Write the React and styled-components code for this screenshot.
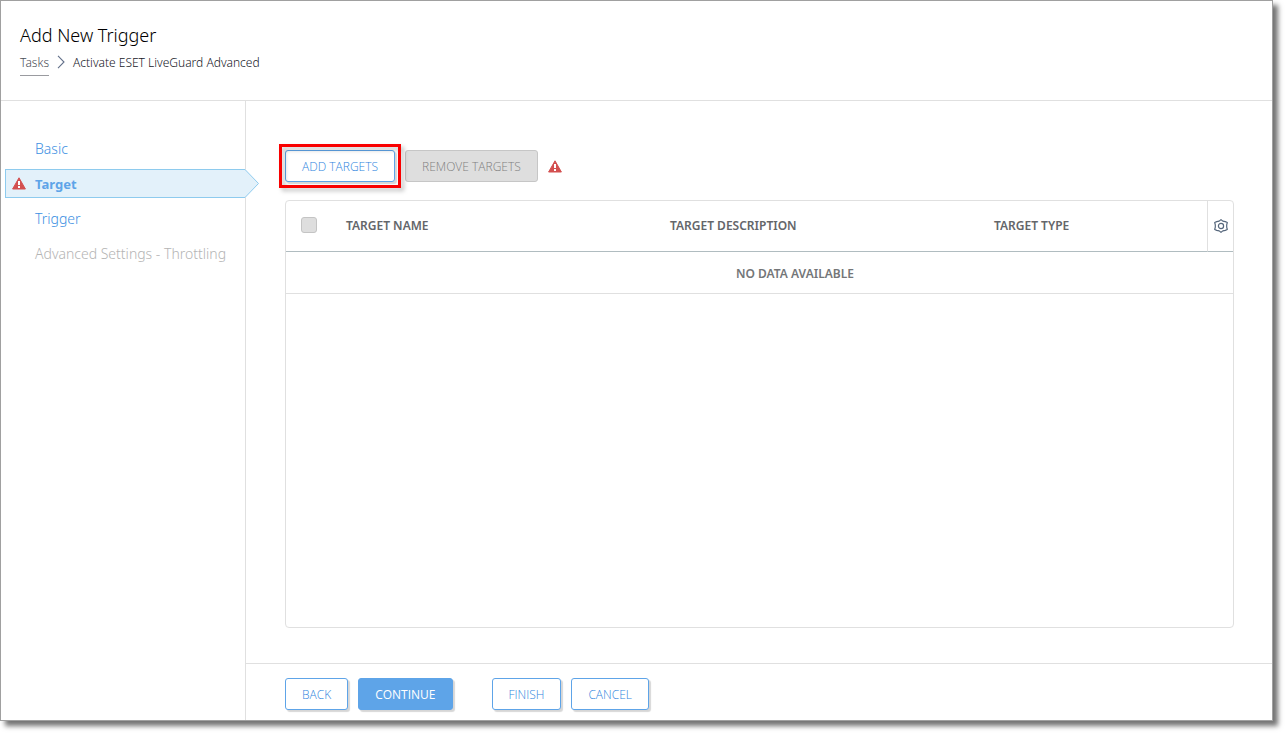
import React, { useState } from 'react';
import styled, { createGlobalStyle, css } from 'styled-components';

const GlobalStyle = createGlobalStyle`
  * {
    box-sizing: border-box;
  }

  body {
    margin: 0;
    background: #fff;
    color: #53565a;
    font-family: "Noto Sans", "Open Sans", sans-serif;
    font-size: 12px;
    font-weight: 300;
    line-height: 16px;
  }
`;

const Window = styled.div`
  display: flex;
  flex-direction: column;
  min-height: calc(100vh - 15px);
  margin: 0 15px 15px 0;
  border: 1px solid #a0a0a0;
  background: #fff;
  box-shadow: 5px 5px 5px rgba(0, 0, 0, 0.55);
`;

const Header = styled.header`
  height: 100px;
  padding: 22px 19px 0;
  border-bottom: 1px solid #e0e0e0;
`;

const Title = styled.h1`
  margin: 0;
  color: #000;
  font-size: 18px;
  font-weight: 300;
  line-height: 24px;
`;

const Breadcrumb = styled.nav`
  display: flex;
  align-items: flex-start;
  gap: 8px;
  padding-top: 8px;

  a {
    height: 21px;
    border-bottom: 1px solid #9a9ba0;
    color: #4a4d56;
    text-decoration: none;
  }

  span {
    color: #16171f;
  }
`;

const Body = styled.div`
  flex: 1;
  display: flex;
`;

const Sidebar = styled.nav`
  flex: 0 0 245px;
  padding: 33px 0 0 4px;
  border-right: 1px solid #e0e0e0;

  ul {
    display: flex;
    flex-direction: column;
    gap: 6px;
    margin: 0;
    padding: 0;
    list-style: none;
  }
`;

const Step = styled.a`
  position: relative;
  display: flex;
  align-items: center;
  height: 29px;
  padding: 1px 0 0 30px;
  color: ${(props) => (props.$disabled ? '#b4b4b4' : '#3c8fe2')};
  font-size: 14px;
  text-decoration: none;

  ${(props) =>
    props.$active &&
    css`
      padding: 0 0 0 29px;
      border: 1px solid #8ecbee;
      border-right: none;
      background: #e3f1fa;
      color: #5ea4e8;
      font-size: 13px;
      font-weight: 700;
    `}
`;

const StepAlert = styled.span`
  position: absolute;
  left: 6px;
  top: 7px;
  display: flex;
`;

const StepArrow = styled.svg`
  position: absolute;
  top: -1px;
  left: 100%;
`;

const Main = styled.main`
  flex: 1;
  min-width: 0;
  display: flex;
  flex-direction: column;
`;

const Content = styled.section`
  flex: 1;
  display: flex;
  flex-direction: column;
  padding: 49px 38px 35px 39px;
`;

const Toolbar = styled.div`
  display: flex;
  align-items: center;
  gap: 10px;
  margin-bottom: 18px;
`;

const Button = styled.button`
  height: 32px;
  padding: 1px 16px 0;
  border: 1px solid #5ea4e8;
  border-radius: 3px;
  background: ${(props) => (props.$primary ? '#5ea4e8' : '#fff')};
  box-shadow: 2px 2px 1px rgba(0, 0, 0, 0.16);
  color: ${(props) => (props.$primary ? '#fff' : '#2f86de')};
  font-family: "Open Sans", "Noto Sans", sans-serif;
  font-size: 12px;
  font-weight: ${(props) => (props.$primary ? 400 : 300)};
  line-height: 16px;
  cursor: pointer;

  &:disabled {
    border-color: #c6c6c6;
    background: #dedede;
    box-shadow: none;
    color: #808080;
    cursor: default;
  }
`;

const Highlight = styled.div`
  position: relative;
  display: flex;

  &::after {
    content: '';
    position: absolute;
    inset: -6px;
    border: 3px solid #f90000;
    filter: drop-shadow(3px 3px 2px rgba(0, 0, 0, 0.25));
    pointer-events: none;
  }
`;

const TableBox = styled.div`
  flex: 1;
  border: 1px solid #e0e0e0;
  border-radius: 4px;
`;

const Table = styled.table`
  width: 100%;
  border-collapse: separate;
  border-spacing: 0;
  table-layout: fixed;

  th {
    height: 51px;
    padding: 0 10px;
    border-bottom: 1px solid #b0bcc0;
    color: #64666a;
    font-weight: 600;
    text-align: left;
  }

  th:last-child {
    padding: 0;
    border-left: 1px solid #e0e0e0;
  }

  td {
    height: 42px;
    padding: 2px 0 0 71px;
    border-bottom: 1px solid #e0e0e0;
    color: #747678;
    font-weight: 600;
    text-align: center;
  }
`;

const Checkbox = styled.input`
  appearance: none;
  display: block;
  width: 16px;
  height: 16px;
  margin: 0 0 2px 5px;
  border: 1px solid #c4c4c4;
  border-radius: 3px;
  background: #dedede;
`;

const IconButton = styled.button`
  display: flex;
  align-items: center;
  justify-content: center;
  width: 100%;
  height: 32px;
  padding: 0;
  border: none;
  background: none;
  color: #56677c;
  cursor: pointer;
`;

const Footer = styled.footer`
  display: flex;
  gap: 10px;
  padding: 14px 39px 10px;
  border-top: 1px solid #e0e0e0;
`;

const ButtonGroup = styled.div`
  display: flex;
  gap: 10px;

  & + & {
    margin-left: 29px;
  }
`;

const AlertIcon = () => (
  <svg width="14" height="13" viewBox="0 0 14 13" aria-hidden="true">
    <path d="M7 .8L13.4 12H.6z" fill="#d35050" stroke="#d35050" strokeWidth="1" strokeLinejoin="round" />
    <path d="M6 4h2v4H6zM6 9h2v2H6z" fill="#fff" />
  </svg>
);

const GearIcon = () => (
  <svg width="14" height="14" viewBox="0 0 14 14" fill="none" stroke="currentColor" strokeWidth="1.2" aria-hidden="true">
    <path
      d="M7 .6L8.8 2.1 11.3 2.6 13.3 3.5 12.7 5.8 12.7 8.2 13.3 10.5 11.3 11.4 8.8 11.9 7 13.4 5.2 11.9 2.7 11.4 .7 10.5 1.3 8.2 1.3 5.8 .7 3.5 2.7 2.6 5.2 2.1z"
      strokeLinejoin="round"
    />
    <circle cx="7" cy="7" r="2.6" />
  </svg>
);

const steps = [
  { label: 'Basic' },
  { label: 'Target', alert: true },
  { label: 'Trigger' },
  { label: 'Advanced Settings - Throttling', disabled: true },
];

const App = () => {
  const [current, setCurrent] = useState('Target');

  const handleStep = (event, step) => {
    event.preventDefault();
    if (!step.disabled) {
      setCurrent(step.label);
    }
  };

  return (
    <>
      <GlobalStyle />
      <Window>
        <Header>
          <Title>Add New Trigger</Title>
          <Breadcrumb>
            <a href="#tasks">Tasks</a>
            <svg width="8" height="14" viewBox="0 0 8 14" fill="none" stroke="#62708a" strokeWidth="1.1" aria-hidden="true">
              <path d="M1 .8L7 7 1 13.2" />
            </svg>
            <span>Activate ESET LiveGuard Advanced</span>
          </Breadcrumb>
        </Header>
        <Body>
          <Sidebar>
            <ul>
              {steps.map((step) => (
                <li key={step.label}>
                  <Step
                    href="#step"
                    $active={step.label === current}
                    $disabled={step.disabled}
                    aria-disabled={step.disabled}
                    onClick={(event) => handleStep(event, step)}
                  >
                    {step.alert && (
                      <StepAlert>
                        <AlertIcon />
                      </StepAlert>
                    )}
                    {step.label}
                    {step.label === current && (
                      <StepArrow width="15" height="29" viewBox="0 0 15 29" aria-hidden="true">
                        <path d="M0 .5L13.5 14.5 0 28.5z" fill="#e3f1fa" />
                        <path d="M0 .5L13.5 14.5 0 28.5" fill="none" stroke="#8ecbee" />
                      </StepArrow>
                    )}
                  </Step>
                </li>
              ))}
            </ul>
          </Sidebar>
          <Main>
            <Content>
              <Toolbar>
                <Highlight>
                  <Button type="button">ADD TARGETS</Button>
                </Highlight>
                <Button type="button" disabled>REMOVE TARGETS</Button>
                <AlertIcon />
              </Toolbar>
              <TableBox>
                <Table>
                  <colgroup>
                    <col style={{ width: 50 }} />
                    <col style={{ width: 324 }} />
                    <col style={{ width: 324 }} />
                    <col />
                    <col style={{ width: 26 }} />
                  </colgroup>
                  <thead>
                    <tr>
                      <th><Checkbox type="checkbox" aria-label="Select all" disabled /></th>
                      <th>TARGET NAME</th>
                      <th>TARGET DESCRIPTION</th>
                      <th>TARGET TYPE</th>
                      <th>
                        <IconButton type="button" aria-label="Table settings">
                          <GearIcon />
                        </IconButton>
                      </th>
                    </tr>
                  </thead>
                  <tbody>
                    <tr>
                      <td colSpan="5">NO DATA AVAILABLE</td>
                    </tr>
                  </tbody>
                </Table>
              </TableBox>
            </Content>
            <Footer>
              <ButtonGroup>
                <Button type="button">BACK</Button>
                <Button type="button" $primary>CONTINUE</Button>
              </ButtonGroup>
              <ButtonGroup>
                <Button type="button">FINISH</Button>
                <Button type="button">CANCEL</Button>
              </ButtonGroup>
            </Footer>
          </Main>
        </Body>
      </Window>
    </>
  );
};

export default App;
